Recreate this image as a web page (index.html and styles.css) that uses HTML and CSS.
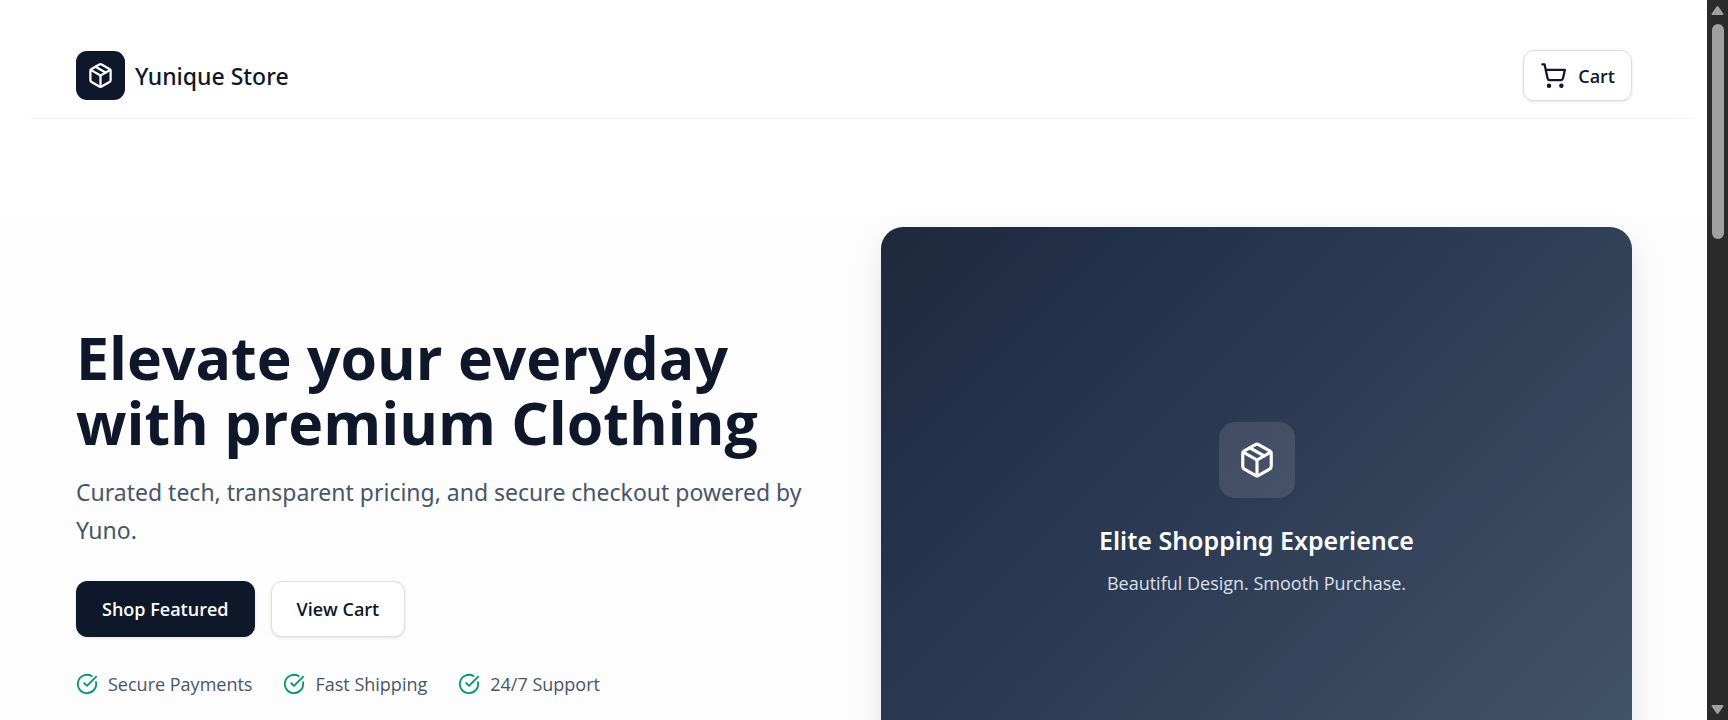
FILE: index.html
```html
<!DOCTYPE html>
<html lang="en">
<head>
<meta charset="utf-8">
<meta name="viewport" content="width=device-width, initial-scale=1">
<title>Yunique Store</title>
<link rel="stylesheet" href="styles.css">
</head>
<body>
<svg class="sprite" aria-hidden="true">
  <symbol id="package" viewBox="0 0 24 24">
    <path d="M11 21.73a2 2 0 0 0 2 0l7-4A2 2 0 0 0 21 16V8a2 2 0 0 0-1-1.73l-7-4a2 2 0 0 0-2 0l-7 4A2 2 0 0 0 3 8v8a2 2 0 0 0 1 1.73z"/>
    <path d="M12 22V12"/>
    <path d="M3.3 7 12 12l8.7-5"/>
    <path d="m7.5 4.27 9 5.15"/>
  </symbol>
  <symbol id="cart" viewBox="0 0 24 24">
    <circle cx="8" cy="21" r="1"/>
    <circle cx="19" cy="21" r="1"/>
    <path d="M2.05 2.05h2l2.66 12.42a2 2 0 0 0 2 1.58h9.78a2 2 0 0 0 1.95-1.57l1.65-7.43H5.12"/>
  </symbol>
  <symbol id="check" viewBox="0 0 24 24">
    <path d="M21.801 10A10 10 0 1 1 17 3.335"/>
    <path d="m9 11 3 3L22 4"/>
  </symbol>
</svg>
<div class="window">
  <div class="page">
    <header class="header">
      <a class="brand" href="#">
        <span class="brand-mark"><svg class="icon icon-md"><use href="#package"/></svg></span>
        <span class="brand-name">Yunique Store</span>
      </a>
      <button class="button button-light button-cart" type="button">
        <svg class="icon icon-md"><use href="#cart"/></svg>
        Cart
      </button>
    </header>
    <main class="hero">
      <section class="intro">
        <h1 class="title">Elevate your everyday with premium Clothing</h1>
        <p class="lead">Curated tech, transparent pricing, and secure checkout powered by Yuno.</p>
        <div class="actions">
          <button class="button button-dark" type="button">Shop Featured</button>
          <button class="button button-light" type="button">View Cart</button>
        </div>
        <ul class="perks">
          <li class="perk"><svg class="icon icon-sm"><use href="#check"/></svg>Secure Payments</li>
          <li class="perk"><svg class="icon icon-sm"><use href="#check"/></svg>Fast Shipping</li>
          <li class="perk"><svg class="icon icon-sm"><use href="#check"/></svg>24/7 Support</li>
        </ul>
      </section>
      <section class="card">
        <span class="card-mark"><svg class="icon icon-lg"><use href="#package"/></svg></span>
        <h2 class="card-title">Elite Shopping Experience</h2>
        <p class="card-text">Beautiful Design. Smooth Purchase.</p>
      </section>
    </main>
  </div>
  <div class="scrollbar" aria-hidden="true">
    <svg class="arrow" viewBox="0 0 13 10"><path d="M6.500 1.500 11.500 8.500H1.500Z"/></svg>
    <div class="track"><div class="thumb"></div></div>
    <svg class="arrow" viewBox="0 0 13 10"><path d="M6.500 8.500 1.500 1.500H11.500Z"/></svg>
  </div>
</div>
</body>
</html>
```

FILE: styles.css
```css
* {
  box-sizing: border-box;
}

body {
  margin: 0;
  color: #0f172a;
  background: #fff;
  font-family: "Open Sans", "Noto Sans", sans-serif;
  font-size: 18px;
  line-height: 26px;
}

h1, h2, p, ul {
  margin: 0;
  padding: 0;
}

.sprite {
  display: none;
}

.brand-name,
.lead,
.card-title {
  font-family: "Noto Sans", "Open Sans", sans-serif;
}

.window {
  display: grid;
  grid-template-columns: 1fr 21px;
  height: 100vh;
  overflow: hidden;
}

.page {
  min-width: 0;
  overflow: hidden;
  background: linear-gradient(#fff 216px, #fdfdfd 216px);
}

.header {
  display: flex;
  align-items: center;
  justify-content: space-between;
  padding: 50px 75px 17px 76px;
  border-bottom: 1px solid;
  border-image: linear-gradient(90deg, transparent 28px, #e8eaee 40px, #e8eaee calc(100% - 40px), transparent calc(100% - 8px)) 1;
}

.brand {
  display: flex;
  align-items: center;
  gap: 10px;
  color: inherit;
  text-decoration: none;
}

.brand-mark {
  display: grid;
  place-items: center;
  width: 49px;
  height: 49px;
  border-radius: 11px;
  color: #fff;
  background: #0f172a;
}

.brand-name {
  font-size: 23px;
  font-weight: 500;
}

.icon {
  flex: none;
  fill: none;
  stroke: currentColor;
  stroke-width: 2;
  stroke-linecap: round;
  stroke-linejoin: round;
}

.icon-sm {
  width: 22px;
  height: 22px;
  color: #059669;
}

.icon-md {
  width: 27px;
  height: 27px;
}

.icon-lg {
  width: 38px;
  height: 38px;
}

.button {
  display: flex;
  align-items: center;
  gap: 11px;
  height: 56px;
  padding: 0 25px;
  border: 1px solid #dcdfe6;
  border-radius: 11px;
  font: inherit;
  font-weight: 600;
  box-shadow: 0 1px 3px rgba(15, 23, 42, 0.12);
}

.button-dark {
  border-color: #0f172a;
  color: #fff;
  background: #0f172a;
}

.button-light {
  color: #0f172a;
  background: #fff;
}

.button-cart {
  height: 51px;
  padding: 0 16px;
}

.hero {
  display: grid;
  grid-template-columns: 1fr 1fr;
  gap: 54px;
  align-items: center;
  padding: 108px 75px 108px 76px;
}

.intro {
  padding-top: 4px;
}

.title {
  font-size: 59px;
  font-weight: 700;
  line-height: 65px;
}

.lead {
  margin-top: 18px;
  color: #475569;
  font-size: 23px;
  line-height: 38px;
}

.actions {
  display: flex;
  gap: 16px;
  margin-top: 32px;
}

.perks {
  display: flex;
  gap: 31px;
  margin-top: 34px;
  color: #475569;
  list-style: none;
}

.perk {
  display: flex;
  align-items: center;
  gap: 10px;
}

.card {
  display: flex;
  flex-direction: column;
  align-items: center;
  justify-content: center;
  aspect-ratio: 4 / 3;
  border-radius: 22px;
  color: #fff;
  background: linear-gradient(135deg, #1e293b, #23304a 20%, #2f3c55 50%, #43566b);
  box-shadow: 0 12px 32px rgba(15, 23, 42, 0.1);
}

.card-mark {
  display: grid;
  place-items: center;
  width: 76px;
  height: 76px;
  border-radius: 16px;
  background: rgba(255, 255, 255, 0.11);
}

.card-title {
  margin-top: 24px;
  font-size: 25px;
  font-weight: 600;
  line-height: 36px;
}

.card-text {
  margin-top: 12px;
  color: #dbe1ea;
}

.scrollbar {
  display: flex;
  flex-direction: column;
  align-items: center;
  padding: 5px 0;
  background: #2b2b2b;
}

.arrow {
  width: 13px;
  height: 11px;
  fill: #a0a0a0;
  stroke: #a0a0a0;
  stroke-width: 2;
  stroke-linejoin: round;
}

.track {
  flex: 1;
  padding: 8px 0;
}

.thumb {
  width: 12px;
  height: 32%;
  border-radius: 6px;
  background: #a0a0a0;
}
```
